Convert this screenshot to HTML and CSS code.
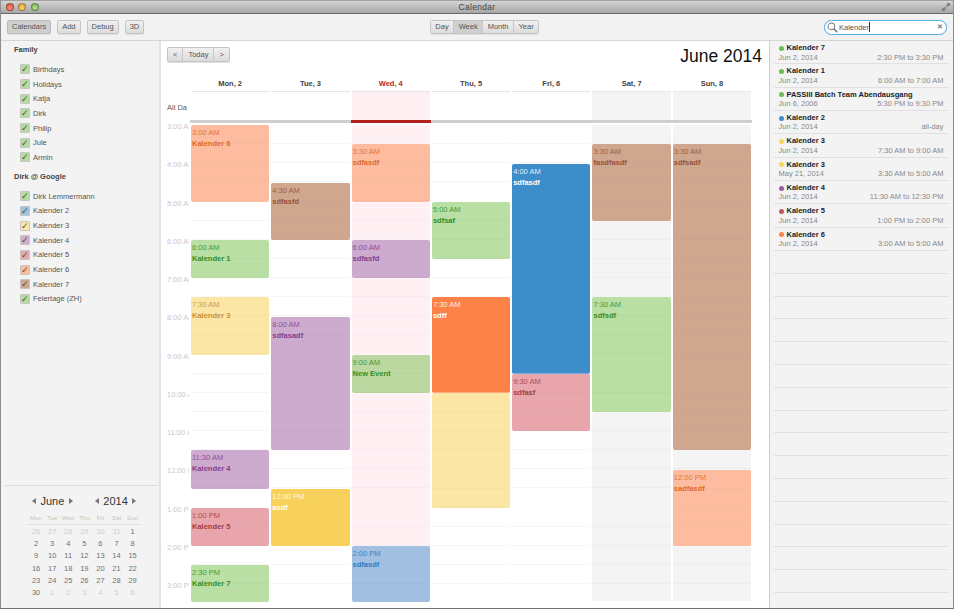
FILE: index.html
```html
<!DOCTYPE html>
<html lang="en">
<head>
<meta charset="utf-8">
<title>Calendar</title>
<link rel="stylesheet" href="styles.css">
</head>
<body>
<div class="window">
  <header class="titlebar">
    <div class="lights"><i class="light red"></i><i class="light amber"></i><i class="light green"></i></div>
    <div class="title">Calendar</div>
    <svg class="resize" width="10" height="10" viewBox="0 0 11 11"><path d="M6 1h4v4l-1.3-1.3-2 2-1.4-1.4 2-2zM5 10H1V6l1.3 1.3 2-2 1.4 1.4-2 2z" fill="#7d7d7d"/></svg>
  </header>
  <div class="toolbar">
    <div class="tools">
      <button class="btn on">Calendars</button>
      <button class="btn">Add</button>
      <button class="btn">Debug</button>
      <button class="btn">3D</button>
    </div>
    <div class="seg views">
      <button>Day</button><button class="on">Week</button><button>Month</button><button>Year</button>
    </div>
    <div class="search">
      <svg width="11" height="11" viewBox="0 0 12 12"><circle cx="4.8" cy="4.8" r="3.6" fill="none" stroke="#777" stroke-width="1.1"/><path d="M7.6 7.6l3.6 3.6" stroke="#777" stroke-width="1.8"/></svg>
      <span class="query">Kalender</span><span class="caret"></span>
      <span class="clear">✕</span>
    </div>
  </div>
  <div class="body">
    <aside class="side">
      <div class="cals">
        <h3 class="group">Family</h3>
        <ul class="callist">
          <li><i class="chk c-green">✓</i>Birthdays</li>
          <li><i class="chk c-green">✓</i>Holidays</li>
          <li><i class="chk c-green">✓</i>Katja</li>
          <li><i class="chk c-green">✓</i>Dirk</li>
          <li><i class="chk c-green">✓</i>Philip</li>
          <li><i class="chk c-green">✓</i>Jule</li>
          <li><i class="chk c-green">✓</i>Armin</li>
        </ul>
        <h3 class="group second">Dirk @ Google</h3>
        <ul class="callist">
          <li><i class="chk c-green">✓</i>Dirk Lemmermann</li>
          <li><i class="chk c-blue">✓</i>Kalender 2</li>
          <li><i class="chk c-yellow">✓</i>Kalender 3</li>
          <li><i class="chk c-purple">✓</i>Kalender 4</li>
          <li><i class="chk c-red">✓</i>Kalender 5</li>
          <li><i class="chk c-orange">✓</i>Kalender 6</li>
          <li><i class="chk c-brown">✓</i>Kalender 7</li>
          <li><i class="chk c-green">✓</i>Feiertage (ZH)</li>
        </ul>
      </div>
      <div class="mini">
        <div class="mini-head">
          <span class="spin"><i class="tri-l"></i><b>June</b><i class="tri-r"></i></span>
          <span class="spin"><i class="tri-l"></i><b>2014</b><i class="tri-r"></i></span>
        </div>
        <div class="mini-grid">
          <span class="dow"></span><span class="dow">Mon</span><span class="dow">Tue</span><span class="dow">Wed</span><span class="dow">Thu</span><span class="dow">Fri</span><span class="dow">Sat</span><span class="dow">Sun</span>
          <span class="wk">...</span><span class="off">26</span><span class="off">27</span><span class="off">28</span><span class="off">29</span><span class="off">30</span><span class="off">31</span><span>1</span>
          <span class="wk">...</span><span>2</span><span>3</span><span>4</span><span>5</span><span>6</span><span>7</span><span>8</span>
          <span class="wk">...</span><span>9</span><span>10</span><span>11</span><span>12</span><span>13</span><span>14</span><span>15</span>
          <span class="wk">...</span><span>16</span><span>17</span><span>18</span><span>19</span><span>20</span><span>21</span><span>22</span>
          <span class="wk">...</span><span>23</span><span>24</span><span>25</span><span>26</span><span>27</span><span>28</span><span>29</span>
          <span class="wk">...</span><span>30</span><span class="off">1</span><span class="off">2</span><span class="off">3</span><span class="off">4</span><span class="off">5</span><span class="off">6</span>
        </div>
      </div>
    </aside>
    <main class="main">
      <div class="main-head">
        <div class="seg nav"><button>&lt;</button><button>Today</button><button>&gt;</button></div>
        <div class="month">June 2014</div>
      </div>
      <div class="week">
        <div class="gutter">
          <div class="allday-label">All Da</div>
          <div class="hours">
            <span>3:00 AM</span><span>4:00 AM</span><span>5:00 AM</span><span>6:00 AM</span><span>7:00 AM</span><span>8:00 AM</span><span>9:00 AM</span><span>10:00 AM</span><span>11:00 AM</span><span>12:00 PM</span><span>1:00 PM</span><span>2:00 PM</span><span>3:00 PM</span>
          </div>
        </div>
        <section class="day">
          <h4 class="dayname">Mon, 2</h4><div class="allday"></div>
          <div class="slots">
            <div class="ev orange" style="top:0;height:77px"><time>3:00 AM</time><b>Kalender 6</b></div>
            <div class="ev green" style="top:115px;height:38px"><time>6:00 AM</time><b>Kalender 1</b></div>
            <div class="ev yellow" style="top:172px;height:58px"><time>7:30 AM</time><b>Kalender 3</b></div>
            <div class="ev purple" style="top:325px;height:39px"><time>11:30 AM</time><b>Kalender 4</b></div>
            <div class="ev red" style="top:383px;height:38px"><time>1:00 PM</time><b>Kalender 5</b></div>
            <div class="ev green" style="top:440px;height:37px"><time>2:30 PM</time><b>Kalender 7</b></div>
          </div>
        </section>
        <section class="day">
          <h4 class="dayname">Tue, 3</h4><div class="allday"></div>
          <div class="slots">
            <div class="ev brown" style="top:58px;height:57px"><time>4:30 AM</time><b>sdfasfd</b></div>
            <div class="ev purple" style="top:192px;height:133px"><time>8:00 AM</time><b>sdfasadf</b></div>
            <div class="ev gold" style="top:364px;height:57px"><time>12:30 PM</time><b>asdf</b></div>
          </div>
        </section>
        <section class="day today">
          <h4 class="dayname">Wed, 4</h4><div class="allday"></div>
          <div class="slots">
            <div class="ev orange" style="top:19px;height:58px"><time>3:30 AM</time><b>sdfasdf</b></div>
            <div class="ev purple" style="top:115px;height:38px"><time>6:00 AM</time><b>sdfasfd</b></div>
            <div class="ev sage" style="top:230px;height:38px"><time>9:00 AM</time><b>New Event</b></div>
            <div class="ev blue" style="top:421px;height:56px"><time>2:00 PM</time><b>sdfasdf</b></div>
          </div>
        </section>
        <section class="day">
          <h4 class="dayname">Thu, 5</h4><div class="allday"></div>
          <div class="slots">
            <div class="ev green" style="top:77px;height:57px"><time>5:00 AM</time><b>sdfsaf</b></div>
            <div class="ev solid-orange" style="top:172px;height:96px"><time>7:30 AM</time><b>sdff</b></div>
            <div class="ev yellow" style="top:268px;height:115px"></div>
          </div>
        </section>
        <section class="day">
          <h4 class="dayname">Fri, 6</h4><div class="allday"></div>
          <div class="slots">
            <div class="ev solid-blue" style="top:39px;height:210px"><time>4:00 AM</time><b>sdfasdf</b></div>
            <div class="ev red" style="top:249px;height:57px"><time>9:30 AM</time><b>sdfasf</b></div>
          </div>
        </section>
        <section class="day weekend">
          <h4 class="dayname">Sat, 7</h4><div class="allday"></div>
          <div class="slots">
            <div class="ev brown" style="top:19px;height:77px"><time>3:30 AM</time><b>fasdfasdf</b></div>
            <div class="ev green" style="top:172px;height:115px"><time>7:30 AM</time><b>sdfsdf</b></div>
          </div>
        </section>
        <section class="day weekend">
          <h4 class="dayname">Sun, 8</h4><div class="allday"></div>
          <div class="slots">
            <div class="ev brown" style="top:19px;height:306px"><time>3:30 AM</time><b>sdfsadf</b></div>
            <div class="ev orange" style="top:345px;height:76px"><time>12:00 PM</time><b>sadfasdf</b></div>
          </div>
        </section>
      </div>
    </main>
    <aside class="results">
      <article class="res"><div class="r1"><i class="dot d-green"></i>Kalender 7</div><div class="r2"><span>Jun 2, 2014</span><span>2:30 PM to 3:30 PM</span></div></article>
      <article class="res"><div class="r1"><i class="dot d-green"></i>Kalender 1</div><div class="r2"><span>Jun 2, 2014</span><span>6:00 AM to 7:00 AM</span></div></article>
      <article class="res"><div class="r1"><i class="dot d-green"></i>PASSIII Batch Team Abendausgang</div><div class="r2"><span>Jun 6, 2006</span><span>5:30 PM to 9:30 PM</span></div></article>
      <article class="res"><div class="r1"><i class="dot d-blue"></i>Kalender 2</div><div class="r2"><span>Jun 2, 2014</span><span>all-day</span></div></article>
      <article class="res"><div class="r1"><i class="dot d-yellow"></i>Kalender 3</div><div class="r2"><span>Jun 2, 2014</span><span>7:30 AM to 9:00 AM</span></div></article>
      <article class="res"><div class="r1"><i class="dot d-yellow"></i>Kalender 3</div><div class="r2"><span>May 21, 2014</span><span>3:30 AM to 5:00 AM</span></div></article>
      <article class="res"><div class="r1"><i class="dot d-purple"></i>Kalender 4</div><div class="r2"><span>Jun 2, 2014</span><span>11:30 AM to 12:30 PM</span></div></article>
      <article class="res"><div class="r1"><i class="dot d-red"></i>Kalender 5</div><div class="r2"><span>Jun 2, 2014</span><span>1:00 PM to 2:00 PM</span></div></article>
      <article class="res"><div class="r1"><i class="dot d-orange"></i>Kalender 6</div><div class="r2"><span>Jun 2, 2014</span><span>3:00 AM to 5:00 AM</span></div></article>
      <div class="blank"></div><div class="blank"></div><div class="blank"></div><div class="blank"></div><div class="blank"></div><div class="blank"></div><div class="blank"></div><div class="blank"></div><div class="blank"></div><div class="blank"></div><div class="blank"></div><div class="blank"></div><div class="blank"></div><div class="blank"></div><div class="blank"></div>
    </aside>
  </div>
</div>
</body>
</html>
```
FILE: styles.css
```css
* { box-sizing: border-box; }
html, body { margin: 0; height: 100%; overflow: hidden; }
body { font-family: "Liberation Sans", Arial, sans-serif; font-size: 7.5px; color: #444; background: #fff; }
button { font: inherit; }
ul { list-style: none; margin: 0; padding: 0; }
h3, h4 { margin: 0; }

.window { width: 954px; height: 609px; display: flex; flex-direction: column; border-left: 1px solid #8e8e8e; border-right: 1px solid #8e8e8e; border-bottom: 1px solid #6f6f6f; border-top: 1px solid #a0a0a0; overflow: hidden; }

.titlebar { flex: none; height: 13px; position: relative; display: flex; align-items: center; justify-content: center; background: linear-gradient(#d4d4d4, #a6a6a6); border-bottom: 1px solid #6b6b6b; }
.lights { position: absolute; left: 4.5px; top: 2px; display: flex; gap: 4.5px; }
.light { display: block; width: 8px; height: 8px; border-radius: 50%; border: 1px solid rgba(0,0,0,.3); }
.red { background: radial-gradient(circle at 50% 70%, #f59a86, #d8452f); }
.amber { background: radial-gradient(circle at 50% 70%, #f9d37f, #dc9a2a); }
.green { background: radial-gradient(circle at 50% 70%, #b8e08c, #72ab4b); }
.title { font-size: 8.5px; color: #444; letter-spacing: .3px; }
.resize { position: absolute; right: 2px; top: 1px; }

.toolbar { flex: none; height: 27px; display: grid; grid-template-columns: 1fr auto 1fr; align-items: center; padding: 0 6px; background: #f2f2f2; border-bottom: 1px solid #d6d6d6; }
.tools { display: flex; gap: 6px; }
.btn { height: 14px; padding: 0 4px; border: 1px solid #c4c4c4; border-radius: 2px; background: linear-gradient(#f0f0f0, #dcdcdc); color: #555; line-height: 1; box-shadow: 0 1px 0 #e2e2e2; }
.btn.on { background: #cfcfcf; border-color: #bbb; }
.seg { display: inline-flex; border: 1px solid #c4c4c4; border-radius: 2px; height: 14px; box-shadow: 0 1px 0 #e2e2e2; }
.seg button { border: 0; border-left: 1px solid #c8c8c8; padding: 0 4.5px; background: linear-gradient(#f0f0f0, #dcdcdc); color: #555; line-height: 1; }
.seg button:first-child { border-left: 0; }
.seg button.on { background: #cfcfcf; }
.views { margin-left: 15px; }

.search { justify-self: end; width: 123px; height: 15px; display: flex; align-items: center; border: 1.5px solid #5cb0e4; border-radius: 8px; background: #fff; padding: 0 3px 0 1.5px; box-shadow: 0 0 1px #8ccaf0; }
.query { margin-left: 1.5px; color: #555; }
.caret { width: 1px; height: 10px; background: #333; }
.clear { margin-left: auto; font-size: 7px; font-weight: bold; color: #777; }

.body { flex: 1; min-height: 0; display: flex; }
.side { flex: none; width: 160px; background: #f3f3f3; border-right: 2px solid #e2e2e2; display: flex; flex-direction: column; justify-content: space-between; }
.cals { padding: 3px 0 0 13px; }
.group { font-size: 7.5px; font-weight: bold; color: #444; line-height: 12px; }
.group.second { margin-top: 6px; }
.callist { margin-top: 6px; padding-left: 6px; }
.callist li { display: flex; align-items: center; height: 14.7px; color: #555; }
.chk { flex: none; width: 10px; height: 10px; margin-right: 3px; border: 1px solid #c6c6c6; border-radius: 1px; font-style: normal; font-size: 9px; line-height: 8px; text-align: center; color: #3e5a35; }
.c-green { background: #b7d9a2; }
.c-blue { background: #a3c0e0; }
.c-yellow { background: #fae5a6; }
.c-purple { background: #ceacd0; }
.c-red { background: #e9a8ae; }
.c-orange { background: #fdbb9c; }
.c-brown { background: #cfa891; }

.mini { margin: 0 1px 0 4px; border-top: 1px solid #dcdcdc; padding: 9px 0 9.2px; }
.mini-head { display: flex; gap: 22px; padding-left: 27px; height: 12px; }
.spin { display: flex; align-items: center; gap: 4.5px; }
.spin b { font-weight: normal; font-size: 11px; color: #333; line-height: 12px; }
.tri-l, .tri-r { display: block; width: 0; height: 0; border-top: 3px solid transparent; border-bottom: 3px solid transparent; }
.tri-l { border-right: 4px solid #777; }
.tri-r { border-left: 4px solid #777; }
.mini-grid { display: grid; grid-template-columns: 23px repeat(7, 16.1px); grid-template-rows: 13px repeat(6, 12.3px); margin-top: 5px; justify-items: center; align-items: center; color: #707070; }
.mini-grid .dow { align-self: start; font-size: 6.2px; line-height: 12px; height: 13px; color: #c4c4c4; border-bottom: 1px solid #e0e0e0; width: 100%; text-align: center; }
.mini-grid .dow:first-child { border-bottom: 0; }
.mini-grid .off { color: #cfcfcf; }
.mini-grid .wk { color: #cfcfcf; font-size: 6px; justify-self: end; padding-right: 2px; }

.main { flex: none; width: 608px; background: #fff; display: flex; flex-direction: column; min-width: 0; }
.main-head { flex: none; height: 36px; display: flex; justify-content: space-between; padding: 6px 7px 0 6px; }
.seg.nav { height: 15px; }
.nav button { padding: 0 5px; }
.month { font-size: 17.5px; color: #111; line-height: 20px; margin-top: -1px; }

.week { flex: 1; min-height: 0; display: grid; grid-template-columns: 28px repeat(7, 78.3px); column-gap: 2px; padding-bottom: 7px; }
.gutter { display: flex; flex-direction: column; margin-left: 6px; overflow: hidden; color: #555; }
.allday-label { flex: none; margin-top: 25px; height: 20px; white-space: nowrap; line-height: 12px; }
.hours { flex: none; display: grid; grid-auto-rows: 38.25px; color: #c9c9c9; white-space: nowrap; line-height: 10px; }

.day { display: flex; flex-direction: column; min-width: 0; }
.dayname { flex: none; height: 15px; font-size: 7.5px; font-weight: bold; color: #444; text-align: center; line-height: 14px; border-bottom: 1px solid #e6e6e6; }
.allday { flex: none; height: 31px; border-bottom: 3px solid #cfcfcf; margin: 0 -1px; }
.slots { flex: 1; position: relative; margin-top: 2px; background: repeating-linear-gradient(#fff 0, #fff 18.2px, #f5f5f5 18.2px, #f5f5f5 19.125px); }
.today .dayname { color: #b5262a; }
.today .allday { background: linear-gradient(#fff0f4, #fff0f4) no-repeat center / calc(100% - 2px) 100%; border-bottom-color: #b0201c; }
.today .slots { background: repeating-linear-gradient(#fff0f4 0, #fff0f4 18.2px, #f8eaee 18.2px, #f8eaee 19.125px); }
.weekend .allday { background: linear-gradient(#f4f4f4, #f4f4f4) no-repeat center / calc(100% - 2px) 100%; }
.weekend .slots { background: repeating-linear-gradient(#f4f4f4 0, #f4f4f4 18.2px, #eeeeee 18.2px, #eeeeee 19.125px); }

.ev { position: absolute; left: 0; right: 0; padding: 3px 1px 0 1px; border-radius: 2px; line-height: 10.5px; overflow: hidden; box-shadow: 0 0 0 .5px rgba(255,255,255,.6); background-image: repeating-linear-gradient(transparent 0, transparent 18.2px, rgba(0,0,0,.025) 18.2px, rgba(0,0,0,.025) 19.125px); }
.ev time { display: block; opacity: .85; }
.ev b { display: block; }
.orange { background-color: #fdbc9f; color: #dd6a2c; }
.green { background-color: #b9dfa4; color: #2f8f2a; }
.yellow { background-color: #fbe6a6; color: #c7913b; }
.purple { background-color: #cdabcf; color: #85408a; }
.red { background-color: #e8a5ac; color: #a53e44; }
.brown { background-color: #cfa78f; color: #99503a; }
.gold { background-color: #f8d15c; color: #fff; background-image: none; }
.sage { background-color: #bbd8a0; color: #2f8f2a; }
.blue { background-color: #a0bfe1; color: #2f7cc0; }
.solid-orange { background-color: #fc8247; color: #fff; background-image: none; }
.solid-blue { background-color: #3e8dcb; color: #fff; background-image: none; }

.results { flex: 1; min-width: 0; background: #f3f3f3; border-left: 1px solid #cfcfcf; padding: 0 4px; overflow: hidden; }
.res { height: 23.33px; border-bottom: 1px solid #e0e0e0; padding: 3px 5.5px 0 4.5px; }
.blank { height: 22.8px; border-bottom: 1px solid #e0e0e0; }
.r1 { display: flex; align-items: center; font-weight: bold; color: #1c1c2a; line-height: 8.5px; white-space: nowrap; }
.dot { width: 5px; height: 5px; border-radius: 50%; margin-right: 3px; flex: none; }
.d-green { background: #6cbb57; }
.d-blue { background: #3e8dcb; }
.d-yellow { background: #fbd45c; }
.d-purple { background: #9b59a8; }
.d-red { background: #bf5560; }
.d-orange { background: #fc8247; }
.r2 { display: flex; justify-content: space-between; color: #888; line-height: 10px; }
```
